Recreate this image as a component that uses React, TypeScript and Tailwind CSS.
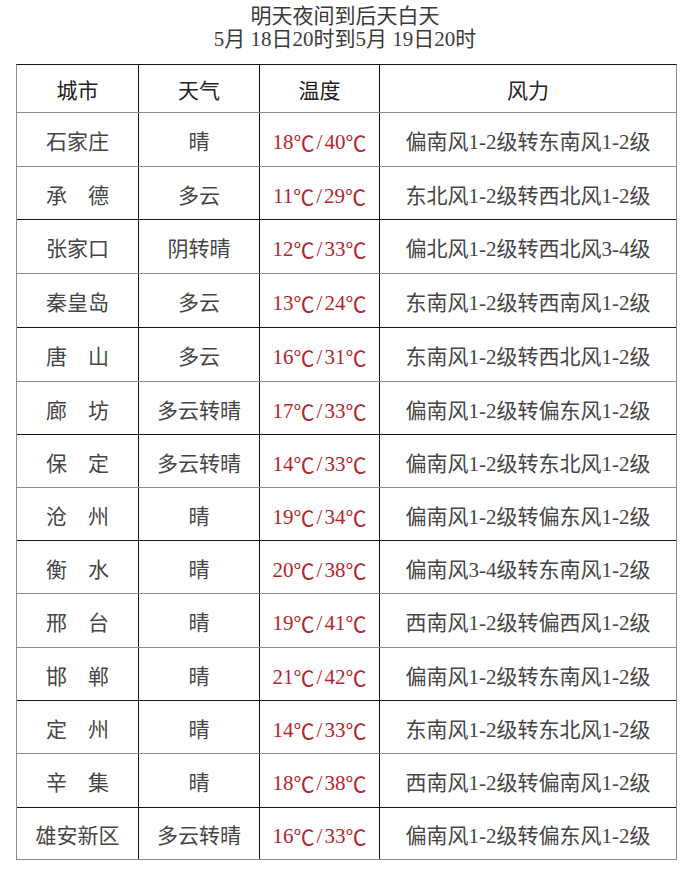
const rows = [
  { city: "石家庄", weather: "晴", temp: ["18", "40"], wind: "偏南风1-2级转东南风1-2级", h: "h-[54px]", line: "border-t-[#8c8c8c]" },
  { city: "承　德", weather: "多云", temp: ["11", "29"], wind: "东北风1-2级转西北风1-2级", h: "h-[53px]", line: "border-t-[#8c8c8c]" },
  { city: "张家口", weather: "阴转晴", temp: ["12", "33"], wind: "偏北风1-2级转西北风3-4级", h: "h-[54px]", line: "border-t-[#151515]" },
  { city: "秦皇岛", weather: "多云", temp: ["13", "24"], wind: "东南风1-2级转西南风1-2级", h: "h-[54px]", line: "border-t-[#8c8c8c]" },
  { city: "唐　山", weather: "多云", temp: ["16", "31"], wind: "东南风1-2级转西北风1-2级", h: "h-[54px]", line: "border-t-[#151515]" },
  { city: "廊　坊", weather: "多云转晴", temp: ["17", "33"], wind: "偏南风1-2级转偏东风1-2级", h: "h-[53px]", line: "border-t-[#8c8c8c]" },
  { city: "保　定", weather: "多云转晴", temp: ["14", "33"], wind: "偏南风1-2级转东北风1-2级", h: "h-[53px]", line: "border-t-[#151515]" },
  { city: "沧　州", weather: "晴", temp: ["19", "34"], wind: "偏南风1-2级转偏东风1-2级", h: "h-[53px]", line: "border-t-[#8c8c8c]" },
  { city: "衡　水", weather: "晴", temp: ["20", "38"], wind: "偏南风3-4级转东南风1-2级", h: "h-[53px]", line: "border-t-[#151515]" },
  { city: "邢　台", weather: "晴", temp: ["19", "41"], wind: "西南风1-2级转偏西风1-2级", h: "h-[54px]", line: "border-t-[#8c8c8c]" },
  { city: "邯　郸", weather: "晴", temp: ["21", "42"], wind: "偏南风1-2级转东南风1-2级", h: "h-[53px]", line: "border-t-[#8c8c8c]" },
  { city: "定　州", weather: "晴", temp: ["14", "33"], wind: "东南风1-2级转东北风1-2级", h: "h-[53px]", line: "border-t-[#151515]" },
  { city: "辛　集", weather: "晴", temp: ["18", "38"], wind: "西南风1-2级转偏南风1-2级", h: "h-[54px]", line: "border-t-[#8c8c8c]" },
  { city: "雄安新区", weather: "多云转晴", temp: ["16", "33"], wind: "偏南风1-2级转偏东风1-2级", h: "h-[52px]", line: "border-t-[#151515]" },
];

const font = "font-['Liberation_Serif','Noto_Sans_CJK_SC',serif]";
const cjk = "font-['Noto_Sans_CJK_SC',sans-serif]";

function Deg() {
  return <span className={cjk}>℃</span>;
}

export default function App() {
  return (
    <div className={`w-[690px] h-[892px] bg-white ${font}`}>
      {/* title */}
      <div className="pt-[5px] text-center text-[21px] leading-[23px] text-[#3a3a3a]">
        <div>明天夜间到后天白天</div>
        <div>5月 18日20时到5月 19日20时</div>
      </div>

      {/* table */}
      <div className="mt-[13px] ml-4 w-[661px] border border-[#8c8c8c] border-t-[#151515] text-[21px]">
        <div className="flex h-[47px] text-[#222]">
          <div className="w-[121px] flex items-center justify-center pt-[6px]">城市</div>
          <div className="w-[121px] flex items-center justify-center pt-[6px] border-l border-[#151515]">天气</div>
          <div className="w-[120px] flex items-center justify-center pt-[6px] border-l border-[#151515]">温度</div>
          <div className="flex-1 flex items-center justify-center pt-[6px] border-l border-[#151515]">风力</div>
        </div>
        {rows.map((r) => (
          <div key={r.city} className={`flex border-t ${r.line} ${r.h} text-[#454545]`}>
            <div className="w-[121px] flex items-center justify-center pt-[7px]">{r.city}</div>
            <div className="w-[121px] flex items-center justify-center pt-[7px] border-l border-[#151515]">{r.weather}</div>
            <div className="w-[120px] flex items-center justify-center pt-[7px] border-l border-[#151515] text-[#b3262b] whitespace-nowrap">
              {r.temp[0]}
              <Deg />
              <span className="px-[2px]">/</span>
              {r.temp[1]}
              <Deg />
            </div>
            <div className="flex-1 flex items-center justify-center pt-[7px] border-l border-[#151515]">{r.wind}</div>
          </div>
        ))}
      </div>
    </div>
  );
}
